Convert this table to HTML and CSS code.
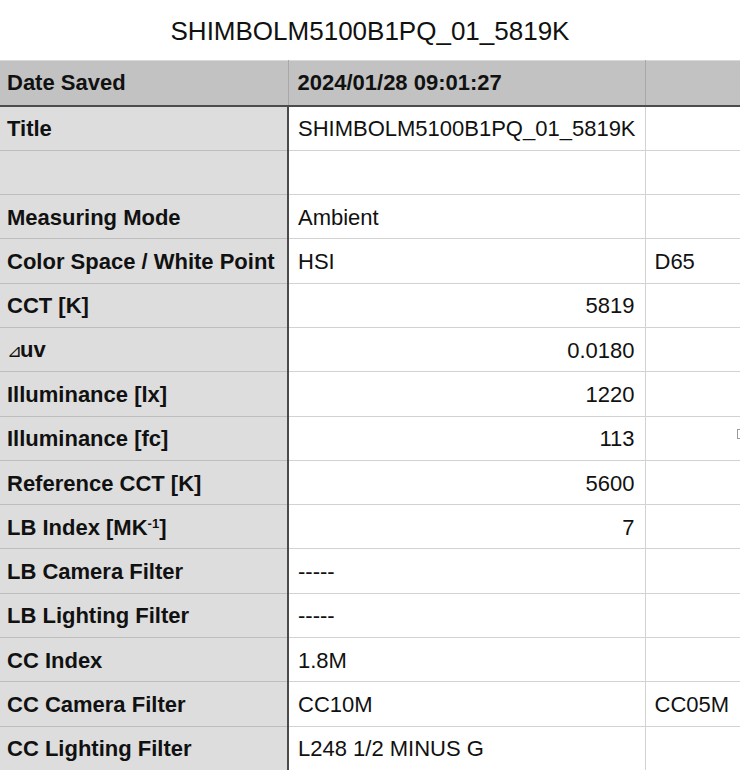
FILE: index.html
```html
<!DOCTYPE html>
<html lang="en">
<head>
<meta charset="utf-8">
<title>SHIMBOLM5100B1PQ_01_5819K</title>
<link rel="stylesheet" href="styles.css">
</head>
<body>
<h1 class="title">SHIMBOLM5100B1PQ_01_5819K</h1>
<div class="sheet-wrap">
<table class="sheet">
  <colgroup><col class="c-label"><col class="c-value"><col class="c-extra"></colgroup>
  <tr class="head"><th>Date Saved</th><th>2024/01/28 09:01:27</th><th></th></tr>
  <tr><th>Title</th><td>SHIMBOLM5100B1PQ_01_5819K</td><td></td></tr>
  <tr><th></th><td></td><td></td></tr>
  <tr><th>Measuring Mode</th><td>Ambient</td><td></td></tr>
  <tr><th>Color Space / White Point</th><td>HSI</td><td>D65</td></tr>
  <tr><th>CCT [K]</th><td class="num">5819</td><td></td></tr>
  <tr><th><span class="delta">⊿</span>uv</th><td class="num">0.0180</td><td></td></tr>
  <tr><th>Illuminance [lx]</th><td class="num">1220</td><td></td></tr>
  <tr><th>Illuminance [fc]</th><td class="num">113</td><td class="marked"><span class="cursor-mark"></span></td></tr>
  <tr><th>Reference CCT [K]</th><td class="num">5600</td><td></td></tr>
  <tr><th>LB Index [MK<sup class="sup">-1</sup>]</th><td class="num">7</td><td></td></tr>
  <tr><th>LB Camera Filter</th><td>-----</td><td></td></tr>
  <tr><th>LB Lighting Filter</th><td>-----</td><td></td></tr>
  <tr><th>CC Index</th><td>1.8M</td><td></td></tr>
  <tr><th>CC Camera Filter</th><td>CC10M</td><td>CC05M</td></tr>
  <tr><th>CC Lighting Filter</th><td>L248 1/2 MINUS G</td><td></td></tr>
</table>
</div>
</body>
</html>
```

FILE: styles.css
```css
html, body {
  margin: 0;
  padding: 0;
  background: #ffffff;
  overflow: hidden;
}

body {
  font-family: "Liberation Sans", Arial, Helvetica, sans-serif;
  color: #111111;
  width: 740px;
  height: 770px;
}

.title {
  margin: 0;
  height: 60px;
  line-height: 62px;
  font-size: 26px;
  font-weight: normal;
  text-align: center;
  color: #111111;
}

.sheet-wrap {
  width: 740px;
  overflow: hidden;
}

.sheet {
  border-collapse: collapse;
  table-layout: fixed;
  width: 780px;
  font-size: 22px;
}

.c-label { width: 288px; }
.c-value { width: 357px; }
.c-extra { width: 135px; }

.sheet th,
.sheet td {
  height: 41.3px;
  padding: 2px 10px 0 9px;
  border: 1px solid #d2d2d2;
  white-space: nowrap;
  text-align: left;
  vertical-align: middle;
  line-height: 24px;
}

.sheet tr > :first-child {
  border-left: none;
}

.sheet th {
  background: #dddddd;
  font-weight: bold;
  padding-left: 7px;
  border-color: #bebebe;
  border-right: 2px solid #4a4a4a;
}

.sheet td {
  background: #ffffff;
  font-weight: normal;
}

.sheet td.num {
  text-align: right;
}

.sheet .head th {
  background: #c1c2c1;
  height: 42.5px;
  padding-top: 1px;
  border-top: 1px solid #d8d8d8;
  border-bottom: 2px solid #4c4c4c;
  border-right: 1px solid #a8a8a8;
  padding-left: 9px;
}

.sheet .head th:first-child {
  padding-left: 7px;
}

.delta {
  font-family: "DejaVu Sans", sans-serif;
  font-weight: normal;
  font-size: 18px;
  letter-spacing: -2px;
}

.sup {
  font-size: 13px;
  vertical-align: 7px;
  line-height: 0;
}

.marked {
  position: relative;
}

.cursor-mark {
  position: absolute;
  left: 91px;
  top: 12px;
  width: 3px;
  height: 8px;
  border: 1px solid #9a9a9a;
  border-right: none;
}
```
